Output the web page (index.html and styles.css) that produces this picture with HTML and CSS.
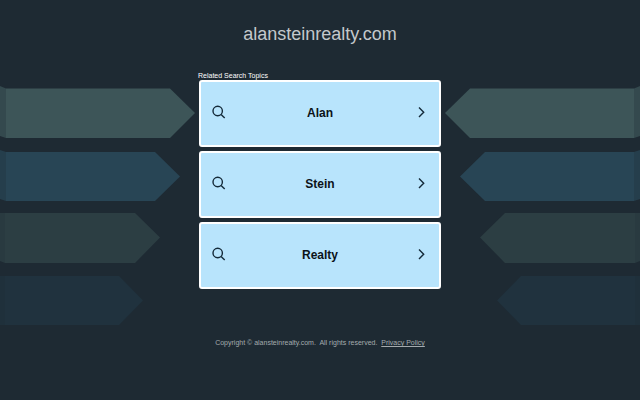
FILE: index.html
```
<!DOCTYPE html>
<html lang="en">
<head>
  <meta charset="UTF-8" />
  <meta name="viewport" content="width=device-width, initial-scale=1.0"/>
  <title>alansteinrealty.com</title>
  <link rel="stylesheet" href="styles.css">
</head>
<body>
  <!-- Icons and background arrows -->
  <svg class="symbols" aria-hidden="true">
    <symbol id="arrows" viewBox="0 0 200 250">
      <path fill="#3d5558" d="M6 8.500H170L195 33L170 58H6z"/>
      <path fill="#34494e" d="M0 6L6 8.500V58L0 56z"/>
      <path fill="#284555" d="M6 72H155L180 96.500L155 121H6z"/>
      <path fill="#253e4c" d="M0 70L6 72V121L0 119z"/>
      <path fill="#2c3e43" d="M5 133H135L160 157.500L135 183H5z"/>
      <path fill="#293a40" d="M0 133H5V183L0 181z"/>
      <path fill="#20323e" d="M5 196H119L143 220.500L119 245H5z"/>
      <path fill="#1f303b" d="M0 196H5V245H0z"/>
    </symbol>
    <symbol id="search" viewBox="0 0 14 14">
      <circle cx="5.700" cy="6" r="4.700"/>
      <path d="M9.100 9.400L12.700 13"/>
    </symbol>
    <symbol id="chevron" viewBox="0 0 14 14">
      <path d="M5 2.500L9.700 7.200L5 11.900"/>
    </symbol>
  </svg>

  <svg class="arrows" aria-hidden="true"><use href="#arrows"/></svg>
  <svg class="arrows arrows-right" aria-hidden="true"><use href="#arrows"/></svg>

  <header>
    <h1>alansteinrealty.com</h1>
  </header>

  <main>
    <h2>Related Search Topics</h2>
    <ul class="topics">
      <li>
        <a href="#alan">
          <svg class="icon"><use href="#search"/></svg>
          <span>Alan</span>
          <svg class="icon"><use href="#chevron"/></svg>
        </a>
      </li>
      <li>
        <a href="#stein">
          <svg class="icon"><use href="#search"/></svg>
          <span>Stein</span>
          <svg class="icon"><use href="#chevron"/></svg>
        </a>
      </li>
      <li>
        <a href="#realty">
          <svg class="icon"><use href="#search"/></svg>
          <span>Realty</span>
          <svg class="icon"><use href="#chevron"/></svg>
        </a>
      </li>
    </ul>
  </main>

  <footer>
    Copyright © alansteinrealty.com.&nbsp; All rights reserved.&nbsp; <a href="#privacy">Privacy Policy</a>
  </footer>
</body>
</html>
```
FILE: styles.css
```
* {
  box-sizing: border-box;
}
body {
  position: relative;
  margin: 0;
  background: #1e2a33;
  color: #fff;
  font-family: Arial, "Liberation Sans", sans-serif;
  overflow-x: hidden;
}
.symbols {
  display: none;
}
.arrows {
  position: absolute;
  top: 80px;
  left: 0;
  width: 200px;
  height: 250px;
  z-index: -1;
}
.arrows-right {
  left: auto;
  right: 0;
  transform: scaleX(-1);
}
header {
  padding-top: 24px;
  text-align: center;
}
h1 {
  margin: 0;
  font-size: 18px;
  line-height: 20px;
  font-weight: normal;
  color: #c3c8cc;
}
main {
  max-width: 244px;
  margin: 28px auto 0;
}
h2 {
  margin: 0;
  font-size: 7px;
  line-height: 8px;
  font-weight: normal;
}
.topics {
  display: flex;
  flex-direction: column;
  gap: 4px;
  margin: 0;
  padding: 0 1px;
  list-style: none;
}
.topics a {
  display: flex;
  align-items: center;
  padding: 23px 11px;
  background: #b8e4fc;
  border: 2px solid #fff;
  border-radius: 3px;
  color: #0b1218;
  font-size: 12px;
  line-height: 17px;
  font-weight: bold;
  text-decoration: none;
}
.topics a:hover {
  background: #d2eefd;
}
.topics span {
  flex: 1;
  text-align: center;
}
.icon {
  width: 14px;
  height: 14px;
  margin-bottom: 3px;
  fill: none;
  stroke: #142a39;
  stroke-width: 1.4;
}
footer {
  margin-top: 48px;
  padding-bottom: 20px;
  text-align: center;
  font-size: 7px;
  line-height: 12px;
  color: #a4aaae;
}
footer a {
  color: inherit;
}
```
